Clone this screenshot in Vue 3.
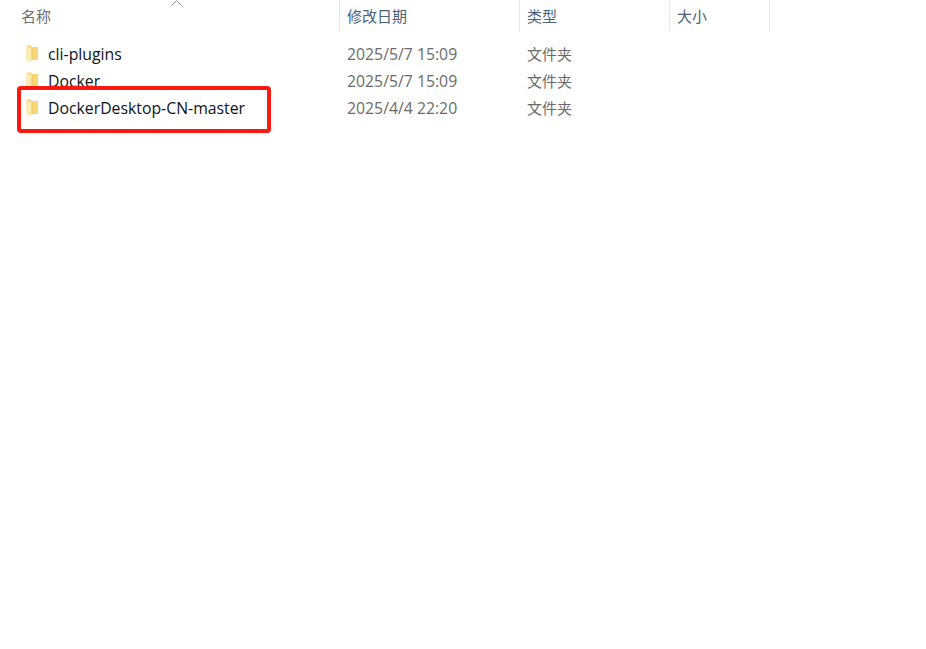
<template>
  <div class="explorer">
    <div class="sort-arrow">
      <svg width="11" height="6" viewBox="0 0 11 6"><path d="M0.5 5.5 L5.5 0.7 L10.5 5.5" fill="none" stroke="#8a8a8a" stroke-width="1" /></svg>
    </div>
    <div class="header">
      <div v-for="col in columns" :key="col.label" class="head-cell" :class="col.cls">{{ col.label }}</div>
    </div>
    <div class="list">
      <div v-for="row in rows" :key="row.name" class="row">
        <div class="name-cell">
          <svg class="folder" width="14" height="18" viewBox="0 0 14 18">
            <path d="M3 0.5 H7 L8 2 H14 V15 H3 Z" fill="#f8d675" />
            <path d="M2 1.5 L8 3.5 V15 L4.5 17.8 L4 15 H2 Z" fill="#feecb4" />
            <path d="M8 3.5 V15" stroke="#e9c260" stroke-width="1" />
          </svg>
          <span>{{ row.name }}</span>
        </div>
        <div class="cell date">{{ row.date }}</div>
        <div class="cell type">{{ row.type }}</div>
      </div>
    </div>
    <div class="highlight"></div>
  </div>
</template>

<script setup>
const columns = [
  { label: '名称', cls: 'col-name' },
  { label: '修改日期', cls: 'col-date' },
  { label: '类型', cls: 'col-type' },
  { label: '大小', cls: 'col-size' }
]

const rows = [
  { name: 'cli-plugins', date: '2025/5/7 15:09', type: '文件夹' },
  { name: 'Docker', date: '2025/5/7 15:09', type: '文件夹' },
  { name: 'DockerDesktop-CN-master', date: '2025/4/4 22:20', type: '文件夹' }
]
</script>

<style>
html, body {
  background: #fff;
}
</style>

<style scoped>
.explorer {
  position: relative;
  width: 926px;
  height: 649px;
  overflow: hidden;
  background: #fff;
  font-family: "Open Sans", "Noto Sans CJK SC", sans-serif;
  font-size: 15px;
}

.sort-arrow {
  position: absolute;
  left: 171px;
  top: 0;
  line-height: 0;
}

.header {
  display: grid;
  grid-template-columns: 340px 180px 150px 100px;
  width: 770px;
  height: 32px;
}

.head-cell {
  padding: 0 7px;
  line-height: 32px;
  color: #4c607a;
  border-right: 1px solid #e5e5e5;
  box-sizing: border-box;
}

.col-name {
  padding-left: 21px;
  color: #6d6d6d;
}

.list {
  padding-top: 9px;
}

.row {
  display: grid;
  grid-template-columns: 340px 180px 150px;
  height: 27px;
  line-height: 27px;
}

.name-cell {
  display: flex;
  align-items: center;
  padding-left: 24px;
  color: #0c1420;
  font-size: 15.8px;
}

.folder {
  margin-right: 10px;
  flex: none;
  margin-top: -2px;
}

.cell {
  padding-left: 7px;
  color: #6b6b6b;
}

.date {
  font-size: 15.8px;
}

.highlight {
  position: absolute;
  left: 17px;
  top: 86px;
  width: 254px;
  height: 47px;
  box-sizing: border-box;
  border: 4px solid #fb1a12;
  border-radius: 4px;
}
</style>
